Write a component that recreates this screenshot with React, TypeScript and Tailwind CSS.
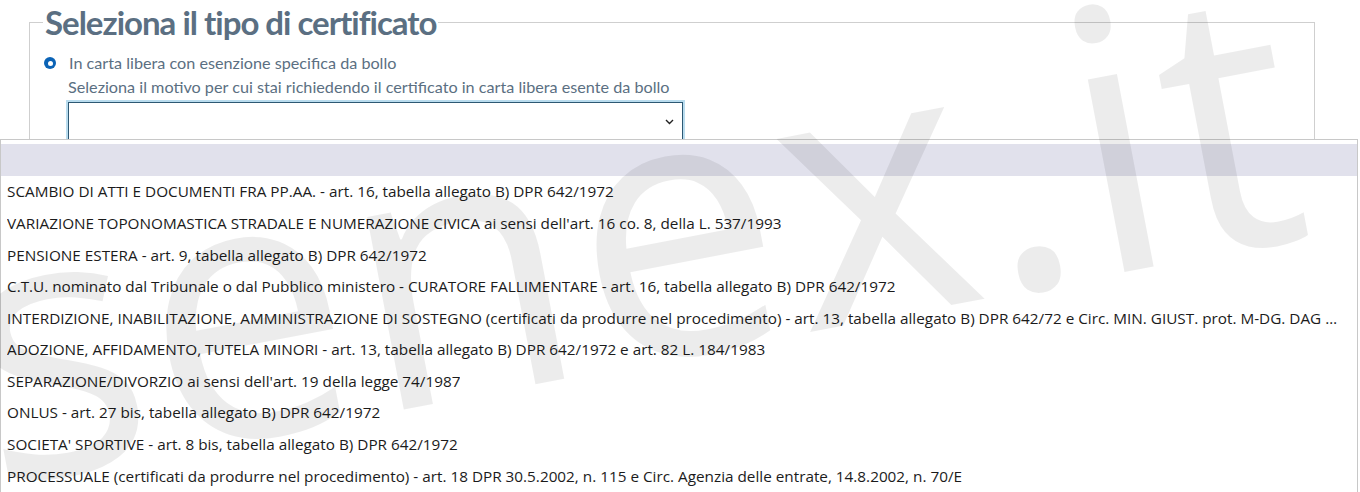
import React from "react";

const options = [
  "SCAMBIO DI ATTI E DOCUMENTI FRA PP.AA. - art. 16, tabella allegato B) DPR 642/1972",
  "VARIAZIONE TOPONOMASTICA STRADALE E NUMERAZIONE CIVICA ai sensi dell'art. 16 co. 8, della L. 537/1993",
  "PENSIONE ESTERA - art. 9, tabella allegato B) DPR 642/1972",
  "C.T.U. nominato dal Tribunale o dal Pubblico ministero - CURATORE FALLIMENTARE - art. 16, tabella allegato B) DPR 642/1972",
  "INTERDIZIONE, INABILITAZIONE, AMMINISTRAZIONE DI SOSTEGNO (certificati da produrre nel procedimento) - art. 13, tabella allegato B) DPR 642/72 e Circ. MIN. GIUST. prot. M-DG. DAG 06/10/2003 n. 0128327",
  "ADOZIONE, AFFIDAMENTO, TUTELA MINORI - art. 13, tabella allegato B) DPR 642/1972 e art. 82 L. 184/1983",
  "SEPARAZIONE/DIVORZIO ai sensi dell'art. 19 della legge 74/1987",
  "ONLUS - art. 27 bis, tabella allegato B) DPR 642/1972",
  "SOCIETA' SPORTIVE - art. 8 bis, tabella allegato B) DPR 642/1972",
  "PROCESSUALE (certificati da produrre nel procedimento) - art. 18 DPR 30.5.2002, n. 115 e Circ. Agenzia delle entrate, 14.8.2002, n. 70/E",
];

export default function App() {
  return (
    <div className="relative w-[1360px] h-[492px] overflow-hidden bg-white">
      {/* Form */}
      <div className="pl-[29px] pr-[45px] pt-[3px]">
        <fieldset className="border border-[#cfcfcf] pl-[13px] h-[200px]">
          <legend className="px-[2px] text-[33px] leading-[38px] font-bold text-[#5b6f82] tracking-[-1px] [font-family:Lato,'Open_Sans',sans-serif]">
            Seleziona il tipo di certificato
          </legend>
          <div className="flex items-center gap-[13px] pl-[1px] mt-[10px] h-[24px]">
            <span className="w-[12px] h-[12px] rounded-full bg-[#0b63b6] flex items-center justify-center">
              <span className="w-[5px] h-[5px] rounded-full bg-white" />
            </span>
            <span className="text-[16.2px] text-[#5b6f82] [font-family:Lato,'Open_Sans',sans-serif]">
              In carta libera con esenzione specifica da bollo
            </span>
          </div>
          <div className="pl-[25px]">
            <div className="h-[24px] flex items-center text-[16.2px] text-[#5b6f82] [font-family:Lato,'Open_Sans',sans-serif]">
              Seleziona il motivo per cui stai richiedendo il certificato in carta libera esente da bollo
            </div>
            <div className="mt-[3px] w-[615px] h-[42px] border border-[#2d5873] shadow-[0_0_0_2px_#b9dcee] bg-white flex items-center justify-end pr-[8px]">
              <svg width="9" height="6" viewBox="0 0 9 6" className="mt-[-3px]">
                <path d="M1 1l3.5 3.5L8 1" fill="none" stroke="#222" strokeWidth="1.4" />
              </svg>
            </div>
          </div>
        </fieldset>
      </div>

      {/* Native dropdown popup */}
      <div className="absolute left-0 top-[139px] w-[1358px] h-[360px] bg-white border-l border-t border-r border-[#c8c8c8] pt-[4px] [font-family:'Open_Sans','Noto_Sans',sans-serif]">
        <div className="h-[32px] bg-[#e1e1ec]" />
        {options.map((o) => (
          <div
            key={o}
            className="h-[31.6px] flex items-center pl-[6px] pr-[12px] text-[15.3px] text-[#1b1b1b]"
          >
            <span className="truncate">{o}</span>
          </div>
        ))}
      </div>

      {/* Watermark */}
      <div
        className="pointer-events-none absolute left-[-8px] top-[163px] whitespace-nowrap text-[366px] leading-none tracking-[4px] text-[rgba(0,0,0,0.075)] origin-[0_325px] rotate-[-10.8deg] [font-family:'Open_Sans',sans-serif]"
      >
        senex.it
      </div>
    </div>
  );
}
